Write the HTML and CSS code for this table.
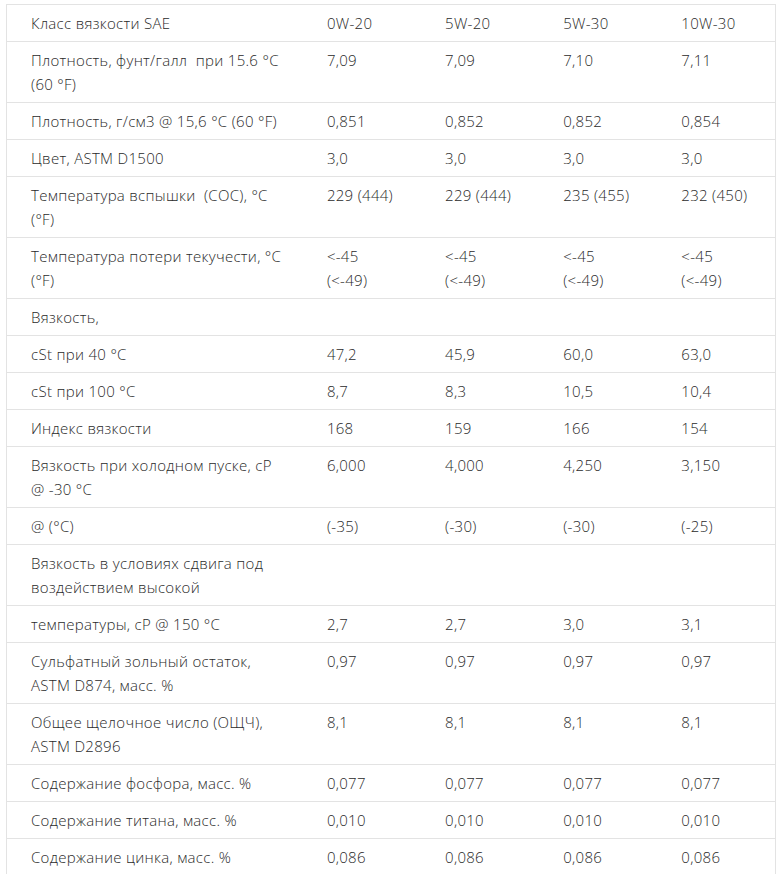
FILE: index.html
```html
<!DOCTYPE html>
<html lang="ru">
<head>
<meta charset="utf-8">
<title>Характеристики</title>
<link rel="stylesheet" href="styles.css">
</head>
<body>
<table class="spec">
<colgroup><col class="c-name"><col class="c-val"><col class="c-val"><col class="c-val"><col class="c-val"></colgroup>
<tbody>
<tr><td>Класс вязкости SAE</td><td>0W-20</td><td>5W-20</td><td>5W-30</td><td>10W-30</td></tr>
<tr><td>Плотность, фунт/галл&nbsp; при 15.6 °C (60 °F)</td><td>7,09</td><td>7,09</td><td>7,10</td><td>7,11</td></tr>
<tr><td>Плотность, г/см3 @ 15,6 °C (60 °F)</td><td>0,851</td><td>0,852</td><td>0,852</td><td>0,854</td></tr>
<tr><td>Цвет, ASTM D1500</td><td>3,0</td><td>3,0</td><td>3,0</td><td>3,0</td></tr>
<tr><td>Температура вспышки&nbsp; (COC), °C (°F)</td><td>229 (444)</td><td>229 (444)</td><td>235 (455)</td><td>232 (450)</td></tr>
<tr><td>Температура потери текучести, °C (°F)</td><td>&lt;-45<br>(&lt;-49)</td><td>&lt;-45<br>(&lt;-49)</td><td>&lt;-45<br>(&lt;-49)</td><td>&lt;-45<br>(&lt;-49)</td></tr>
<tr><td>Вязкость,</td><td></td><td></td><td></td><td></td></tr>
<tr><td>cSt при 40 °C</td><td>47,2</td><td>45,9</td><td>60,0</td><td>63,0</td></tr>
<tr><td>cSt при 100 °C</td><td>8,7</td><td>8,3</td><td>10,5</td><td>10,4</td></tr>
<tr><td>Индекс вязкости</td><td>168</td><td>159</td><td>166</td><td>154</td></tr>
<tr><td>Вязкость при холодном пуске, cP<br>@ -30 °C</td><td>6,000</td><td>4,000</td><td>4,250</td><td>3,150</td></tr>
<tr><td>@ (°C)</td><td>(-35)</td><td>(-30)</td><td>(-30)</td><td>(-25)</td></tr>
<tr><td>Вязкость в условиях сдвига под воздействием высокой</td><td></td><td></td><td></td><td></td></tr>
<tr><td>температуры, cP @ 150 °C</td><td>2,7</td><td>2,7</td><td>3,0</td><td>3,1</td></tr>
<tr><td>Сульфатный зольный остаток, ASTM D874, масс. %</td><td>0,97</td><td>0,97</td><td>0,97</td><td>0,97</td></tr>
<tr><td>Общее щелочное число (ОЩЧ), ASTM D2896</td><td>8,1</td><td>8,1</td><td>8,1</td><td>8,1</td></tr>
<tr><td>Содержание фосфора, масс. %</td><td>0,077</td><td>0,077</td><td>0,077</td><td>0,077</td></tr>
<tr><td>Содержание титана, масс. %</td><td>0,010</td><td>0,010</td><td>0,010</td><td>0,010</td></tr>
<tr><td>Содержание цинка, масс. %</td><td>0,086</td><td>0,086</td><td>0,086</td><td>0,086</td></tr>
</tbody>
</table>
</body>
</html>
```
FILE: styles.css
```css
html, body {
  margin: 0;
  padding: 0;
  background: #fff;
}
body {
  padding: 4px 0 0 6px;
  font-family: "Open Sans", "Noto Sans", sans-serif;
  font-size: 15px;
  font-weight: 300;
  letter-spacing: 0.3px;
  line-height: 24px;
  color: #2a2a2a;
}
.spec {
  border-collapse: collapse;
  table-layout: fixed;
  width: 770px;
  border: 1px solid #e3e3e3;
}
.c-name { width: 296px; }
.c-val { width: 118px; }
.spec td {
  border-top: 1px solid #e3e3e3;
  border-bottom: 1px solid #e3e3e3;
  padding: 6px 20px 6px 24px;
  vertical-align: top;
  text-align: left;
}
```
